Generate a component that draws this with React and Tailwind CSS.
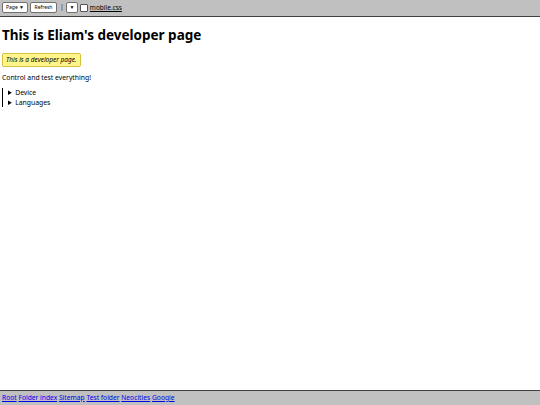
const links = ["Root", "Folder index", "Sitemap", "Test folder", "Neocities", "Google"];

const App = () => {
  return (
    <div className="flex flex-col h-[405px] bg-white text-black font-['Noto_Sans',sans-serif]">
      {/* top toolbar */}
      <div className="flex items-center h-[17px] pl-[2px] pb-[1px] bg-[#c0c0c0] border-b border-[#404040] text-[5px]">
        <button className="h-[11px] w-[26px] bg-white border border-[#707070] rounded-[2px] leading-none">
          Page ▼
        </button>
        <button className="ml-[2px] h-[11px] w-[27px] bg-white border border-[#707070] rounded-[2px] leading-none">
          Refresh
        </button>
        <span className="ml-[3px] text-[7px] text-[#333]">|</span>
        <button className="ml-[2px] h-[11px] w-[12px] bg-white border border-[#707070] rounded-[2px] leading-none">
          ▼
        </button>
        <input
          type="checkbox"
          className="ml-[2px] w-[8px] h-[8px] appearance-none bg-white border border-[#555] rounded-[1px]"
        />
        <a href="#" className="ml-[2px] text-[6.5px] underline text-black">mobile.css</a>
      </div>

      {/* main content */}
      <div className="flex-1 px-[2px]">
        <h1 className="mt-[9px] text-[13.5px] font-bold leading-[18px]">This is Eliam's developer page</h1>
        <div className="mt-[7px] inline-block px-[3px] py-[1px] bg-[#fff58a] border border-[#d8c23a] rounded-[2px] text-[6.5px] italic leading-[10px]">
          This is a developer page.
        </div>
        <p className="mt-[5px] text-[6.8px] leading-[10px]">Control and test everything!</p>
        <div className="mt-[5px] border-l border-black pl-[5px] text-[6.8px] leading-[9.5px]">
          <details>
            <summary>Device</summary>
          </details>
          <details>
            <summary>Languages</summary>
          </details>
        </div>
      </div>

      {/* footer links */}
      <div className="h-[15px] flex items-center px-[2px] bg-[#c0c0c0] border-t border-[#404040] text-[6.7px] whitespace-pre">
        {links.map((l, i) => (
          <span key={l}>
            <a href="#" className="text-[#0000ee] underline">{l}</a>
            {i < links.length - 1 ? " " : ""}
          </span>
        ))}
      </div>
    </div>
  );
};

export default App;
